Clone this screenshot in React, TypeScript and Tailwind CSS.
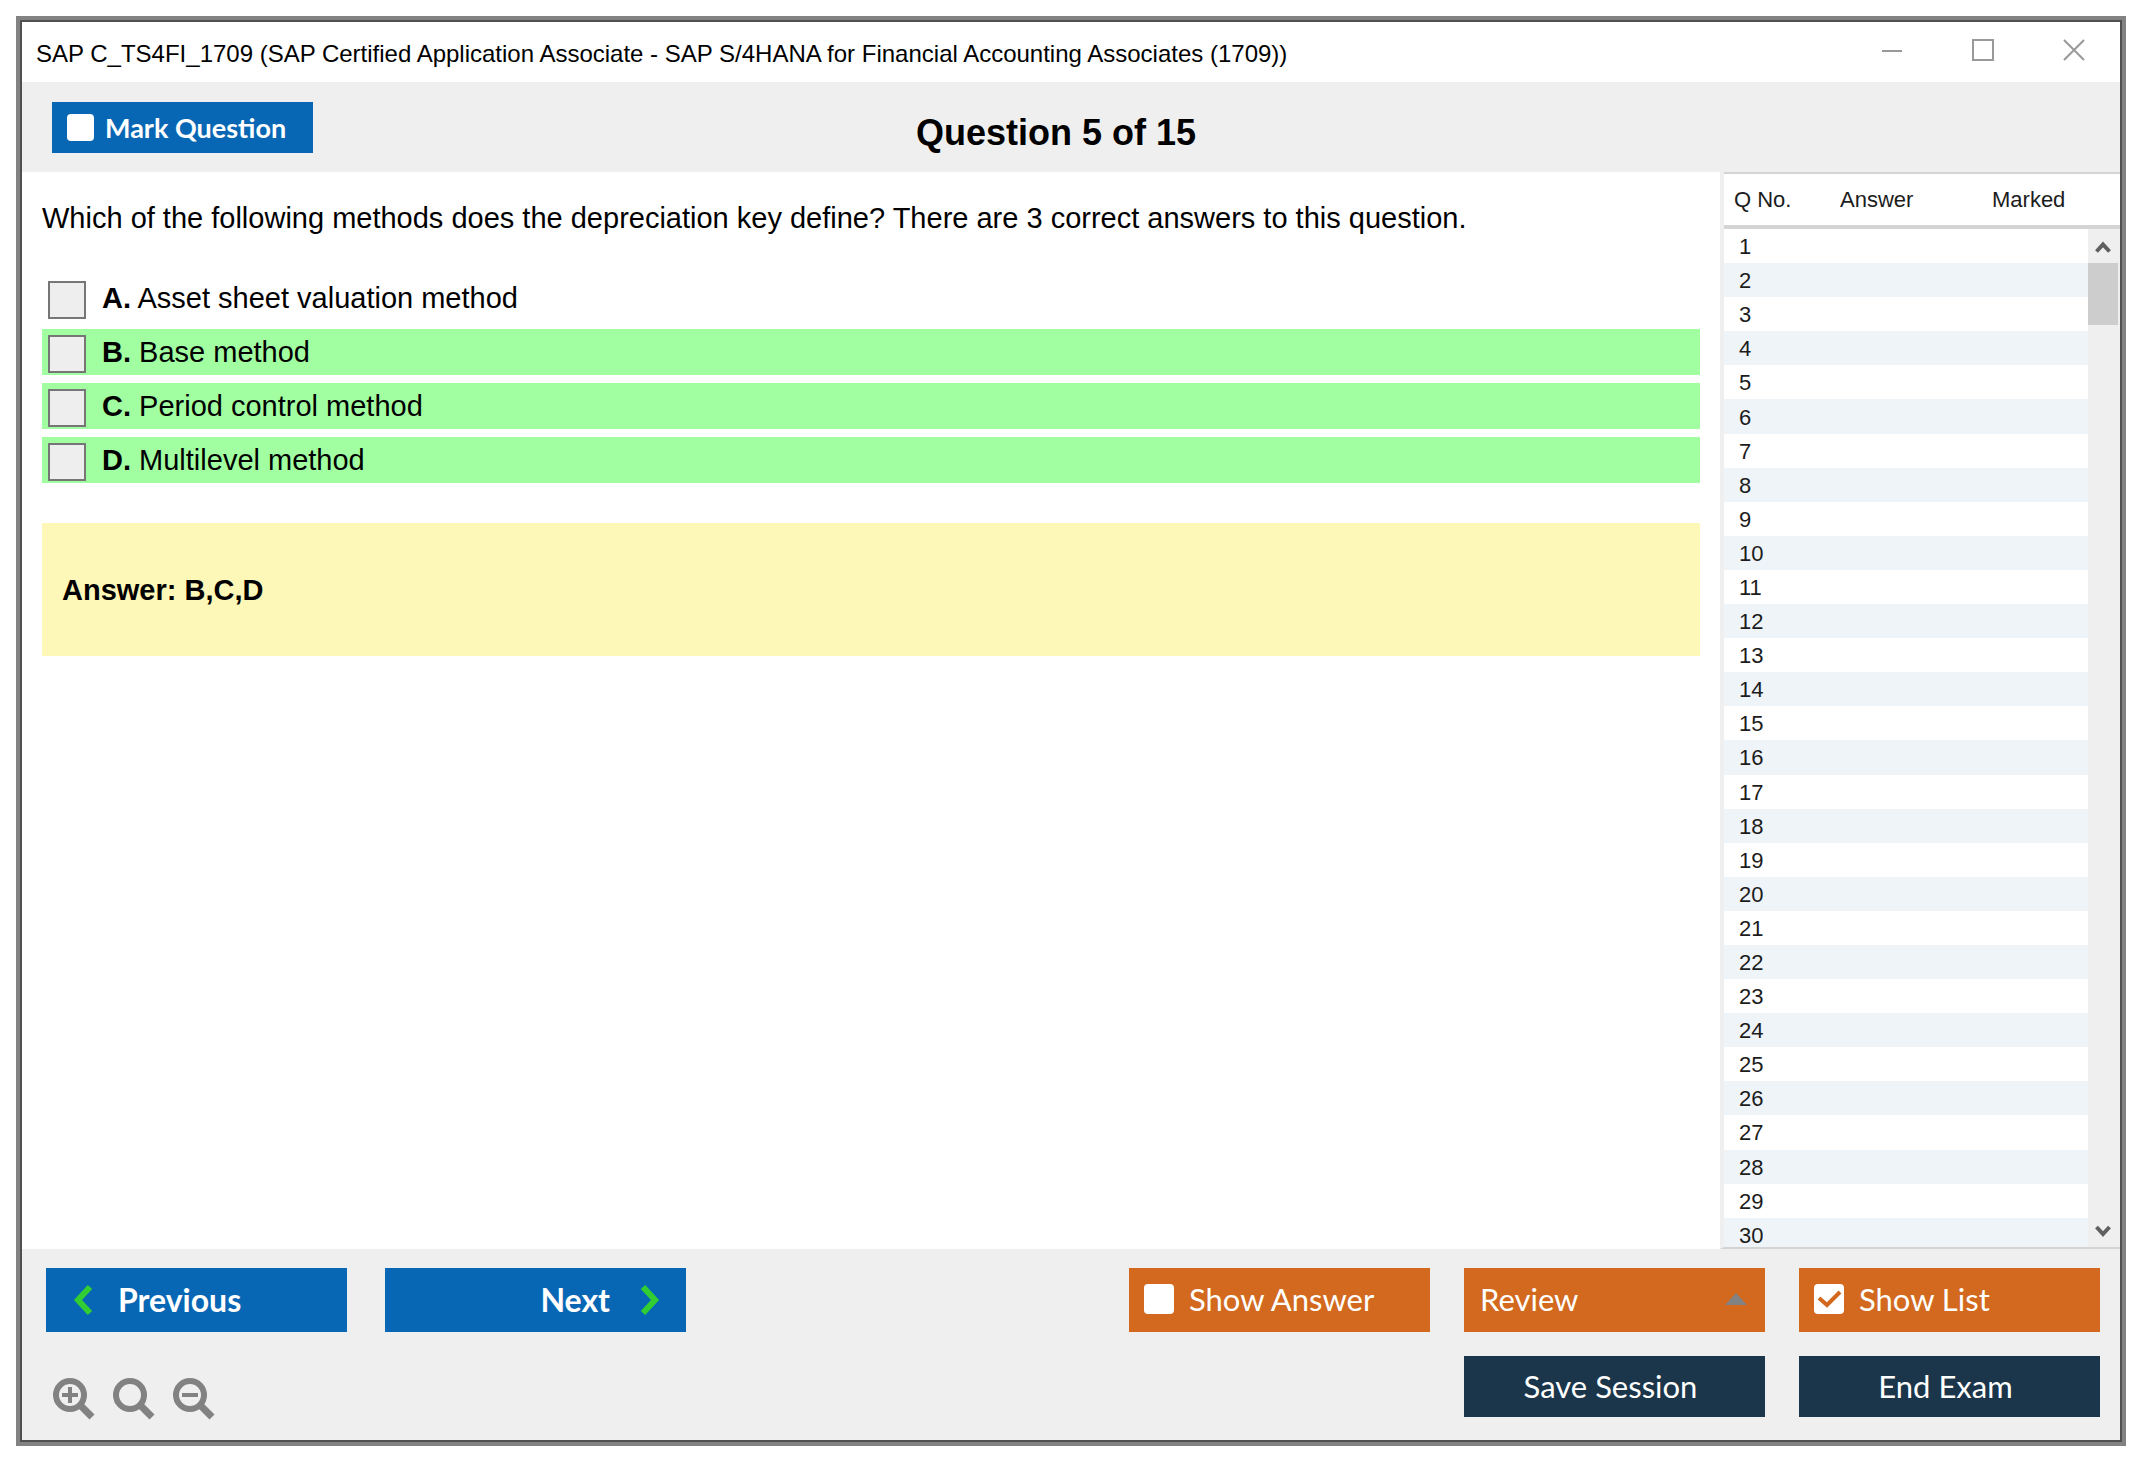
import { useState } from "react";

const options = [
  { key: "A", text: "Asset sheet valuation method", correct: false },
  { key: "B", text: "Base method", correct: true },
  { key: "C", text: "Period control method", correct: true },
  { key: "D", text: "Multilevel method", correct: true },
];

const rows = Array.from({ length: 30 }, (_, i) => i + 1);

const TitleBar = () => (
  <div className="flex h-[60px] items-center justify-between bg-white pl-[14px] pr-[35px]">
    <h1 className="pt-1 text-2xl">
      SAP C_TS4FI_1709 (SAP Certified Application Associate - SAP S/4HANA for Financial Accounting Associates (1709))
    </h1>
    <div className="flex items-center gap-[69px] pb-1 text-[#999999]">
      <button type="button" aria-label="Minimize">
        <svg className="size-[22px]" viewBox="0 0 22 22" fill="none" stroke="currentColor" strokeWidth="2">
          <path d="M1 12h20" />
        </svg>
      </button>
      <button type="button" aria-label="Maximize">
        <svg className="size-[22px]" viewBox="0 0 22 22" fill="none" stroke="currentColor" strokeWidth="2">
          <path d="M1 1h20v20H1z" />
        </svg>
      </button>
      <button type="button" aria-label="Close">
        <svg className="size-[22px]" viewBox="0 0 22 22" fill="none" stroke="currentColor" strokeWidth="2">
          <path d="M1 1l20 20M21 1L1 21" />
        </svg>
      </button>
    </div>
  </div>
);

const Zoom = ({ label, sign }: { label: string; sign?: string }) => (
  <button type="button" aria-label={label}>
    <svg className="size-11" viewBox="0 0 44 44" fill="none" stroke="#828282">
      <circle cx="18" cy="18" r="14" strokeWidth="6" />
      <path d="M27 27L40 40" strokeWidth="7" />
      {sign && <path d={sign} strokeWidth="4" />}
    </svg>
  </button>
);

const QuestionList = () => (
  <aside className="h-[1077px] w-[400px] shrink-0 overflow-hidden border-b-2 border-l-4 border-b-[#d4d4d4] border-l-[#efefef] bg-white">
    <table className="h-[1080px] w-full table-fixed border-collapse text-left text-[22px] text-[#1c1c1c]">
      <thead>
        <tr className="h-[54px] border-t-2 border-b-4 border-[#d4d4d4]">
          <th className="w-[106px] pl-[10px] font-normal">Q No.</th>
          <th className="w-[130px] pl-[10px] font-normal">Answer</th>
          <th className="pl-8 font-normal">Marked</th>
          <th className="w-8" aria-label="Scroll" />
        </tr>
      </thead>
      <tbody>
        {rows.map((n) => (
          <tr key={n} className="h-[34px]">
            <td className={`pt-[2px] pl-[15px] leading-8 ${n % 2 === 0 ? "bg-[#eff4f9]" : "bg-white"}`}>{n}</td>
            <td className={n % 2 === 0 ? "bg-[#eff4f9]" : "bg-white"} />
            <td className={n % 2 === 0 ? "bg-[#eff4f9]" : "bg-white"} />
            {n === 1 && (
              <td rowSpan={rows.length} className="relative">
                <div className="absolute top-0 right-0 bottom-1 flex w-8 flex-col items-center border-r-2 border-[#efefef] bg-[#efefef]">
                  <svg className="h-[34px] w-4 shrink-0" viewBox="0 0 16 34" fill="none" stroke="#606060" strokeWidth="4">
                    <path d="M1.500 22.500L8 15.500l6.500 7" />
                  </svg>
                  <div className="h-[62px] w-full bg-[#cdcdcd]" />
                  <svg className="mt-auto h-[34px] w-4 shrink-0" viewBox="0 0 16 34" fill="none" stroke="#606060" strokeWidth="4">
                    <path d="M1.500 13L8 20l6.500-7" />
                  </svg>
                </div>
              </td>
            )}
          </tr>
        ))}
      </tbody>
    </table>
  </aside>
);

const App = () => {
  const [marked, setMarked] = useState(false);
  const [showAnswer, setShowAnswer] = useState(false);
  const [showList, setShowList] = useState(true);

  return (
    <div className="min-h-screen bg-white pt-4 pr-6 pb-6 pl-4 font-['Liberation_Sans',Arial,sans-serif] text-black">
      <div className="border-4 border-[#828282]">
        <div className="border-2 border-[#505050] bg-[#efefef]">
          <TitleBar />

          <header className="grid h-[90px] grid-cols-[1fr_auto_1fr] items-center pr-[60px] pl-[30px]">
            <label className="flex h-[51px] w-[261px] items-center gap-[11px] bg-[#0867b5] pl-[15px] font-['Lato',sans-serif] text-[27px] font-bold text-white">
              <input
                type="checkbox"
                checked={marked}
                onChange={(e) => setMarked(e.target.checked)}
                className="size-[27px] appearance-none rounded-[4px] bg-white"
              />
              <span className="pt-[2px]">Mark Question</span>
            </label>
            <h2 className="pt-3 text-4xl font-bold">Question 5 of 15</h2>
          </header>

          <div className="flex">
            <main className="min-h-[1077px] min-w-0 flex-1 bg-white px-5 pt-7">
              <p className="text-[29px] leading-9">
                Which of the following methods does the depreciation key define? There are 3 correct answers to this
                question.
              </p>

              <div className="mt-[39px] flex flex-col gap-2">
                {options.map((o) => (
                  <label
                    key={o.key}
                    className={`flex h-[46px] items-center gap-4 pl-[6px] text-[29px] ${o.correct ? "bg-[#a1ffa1]" : ""}`}
                  >
                    <input
                      type="checkbox"
                      className="mt-1 size-[38px] appearance-none border-2 border-[#767676] bg-[#eeeeee]"
                    />
                    <span className="pt-[2px]">
                      <b>{o.key}.</b> {o.text}
                    </span>
                  </label>
                ))}
              </div>

              <div className="mt-10 flex h-[133px] items-center bg-[#fdf7b8] px-5 pt-[2px] text-[29px] font-bold">
                Answer: B,C,D
              </div>
            </main>

            {showList && <QuestionList />}
          </div>

          <footer className="flex h-[191px] justify-between pt-[19px] pr-5 pl-6 font-['Lato',sans-serif] text-[31px] text-white">
            <div>
              <div className="flex gap-[38px] text-[32px] font-bold">
                <button type="button" className="flex h-16 w-[301px] items-center gap-[25px] bg-[#0867b5] pl-[27px]">
                  <svg className="h-[30px] w-5" viewBox="0 0 20 30" fill="none" stroke="#32cd32" strokeWidth="6">
                    <path d="M17 2L5 15l12 13" />
                  </svg>
                  Previous
                </button>
                <button
                  type="button"
                  className="flex h-16 w-[301px] items-center justify-end gap-[30px] bg-[#0867b5] pr-[26px]"
                >
                  Next
                  <svg className="h-[30px] w-5" viewBox="0 0 20 30" fill="none" stroke="#32cd32" strokeWidth="6">
                    <path d="M3 2l12 13L3 28" />
                  </svg>
                </button>
              </div>
              <div className="mt-[45px] flex gap-4 pl-[6px]">
                <Zoom label="Zoom in" sign="M10 18h16M18 10v16" />
                <Zoom label="Reset zoom" />
                <Zoom label="Zoom out" sign="M10 18h16" />
              </div>
            </div>

            <div className="grid auto-rows-min grid-cols-[301px_301px_301px] gap-x-[34px] gap-y-6">
              <label className="flex h-16 items-center gap-[15px] bg-[#d2691e] pb-[2px] pl-[15px]">
                <input
                  type="checkbox"
                  checked={showAnswer}
                  onChange={(e) => setShowAnswer(e.target.checked)}
                  className="size-[30px] appearance-none rounded-[4px] bg-white"
                />
                Show Answer
              </label>
              <button
                type="button"
                aria-haspopup="menu"
                className="flex h-16 items-center justify-between bg-[#d2691e] pr-[18px] pb-[2px] pl-4"
              >
                Review
                <svg className="h-3 w-[22px]" viewBox="0 0 22 12">
                  <path d="M0 12L11 0l11 12z" fill="#828282" />
                </svg>
              </button>
              <label className="flex h-16 items-center gap-[15px] bg-[#d2691e] pb-[2px] pl-[15px]">
                <span className="relative flex">
                  <input
                    type="checkbox"
                    checked={showList}
                    onChange={(e) => setShowList(e.target.checked)}
                    className="peer size-[30px] appearance-none rounded-[4px] bg-white"
                  />
                  <svg
                    className="pointer-events-none absolute inset-0 hidden size-[30px] peer-checked:block"
                    viewBox="0 0 30 30"
                    fill="none"
                    stroke="#d2691e"
                    strokeWidth="4"
                  >
                    <path d="M5 14l8 7L26 8" />
                  </svg>
                </span>
                Show List
              </label>
              <button type="button" className="col-start-2 h-[61px] bg-[#1b364b] pr-2">
                Save Session
              </button>
              <button type="button" className="h-[61px] bg-[#1b364b] pr-2">
                End Exam
              </button>
            </div>
          </footer>
        </div>
      </div>
    </div>
  );
};

export default App;
